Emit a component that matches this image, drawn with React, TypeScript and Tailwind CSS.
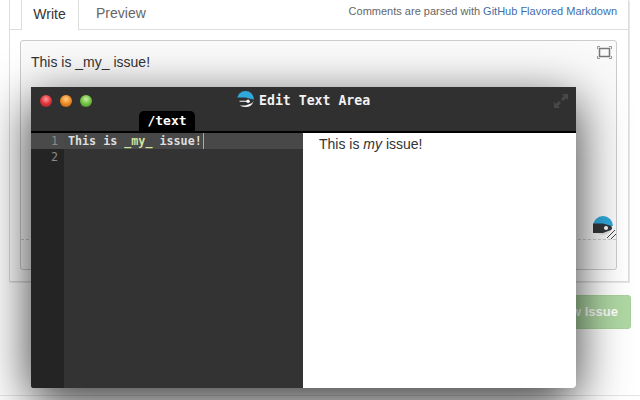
const sans = { fontFamily: '"Liberation Sans", Arial, sans-serif' };
const mono = { fontFamily: '"DejaVu Sans Mono", monospace' };

function PenLogo({ size, light }: { size: number; light?: boolean }) {
  return (
    <svg width={size} height={size} viewBox="0 0 20 20">
      <path d="M0 10a10 10 0 0 1 20 0z" fill="#2fa9dc" />
      <path d="M.5 12a10 10 0 0 0 19 0z" fill={light ? '#f4f4f4' : '#e4e4e4'} />
      <path d="M0 7.500h10l8 2.200q2 2.300 0 4.300l-8 3H0z" fill={light ? '#2f2f2f' : '#34373b'} />
      {light && <path d="M3 12h9" stroke="#fff" strokeWidth="1.200" />}
      <circle cx="13" cy="12" r="2" fill="#fff" />
    </svg>
  );
}

function Light({ className }: { className: string }) {
  return <span className={`h-[12px] w-[12px] rounded-full ${className}`} />;
}

export default function App() {
  return (
    <div className="relative h-[400px] w-[640px] overflow-hidden bg-white text-[#333]" style={sans}>
      <div className="ml-[9px] h-[282px] w-[620px] border-x border-b border-[#ddd] shadow-[1px_1px_0_#e8e8e8]">
        <div className="flex h-[30px] items-stretch border-b border-[#ddd] pl-[11px]">
          <div className="-mb-px flex w-[58px] items-center justify-center border-x border-[#ddd] bg-white pb-[2px] pr-[1px] text-[14px] text-[#333]">
            Write
          </div>
          <div className="ml-[17px] flex items-center pb-[2px] text-[14px] text-[#666]">Preview</div>
          <div className="ml-auto pr-[11px] pt-[4px] text-[11px] leading-[14px] text-[#666]">
            Comments are parsed with <span className="text-[#3f6ea8]">GitHub Flavored Markdown</span>
          </div>
        </div>
        <div className="ml-[10px] mt-[10px] h-[230px] w-[597px] rounded-[3px] border border-[#ccc] bg-[#fafafa]">
          <div className="relative h-[199px] border-b border-dashed border-[#ccc] px-[10px] pt-[12px] text-[14px] leading-[18px] text-[#333]">
            This is _my_ issue!
            <svg className="absolute right-[4px] top-[5px]" width="15" height="13" viewBox="0 0 15 13" fill="none">
              <path d="M.5 3V.5H3M12 .5h2.5V3M14.5 10v2.5H12M3 12.500H.5V10" stroke="#999" />
              <rect x="2.500" y="2.500" width="10" height="8" stroke="#777" strokeWidth="1.500" />
            </svg>
            <div className="absolute bottom-[3px] right-[3px] leading-none">
              <PenLogo size={20} />
            </div>
            <svg className="absolute bottom-0 right-0" width="9" height="9" viewBox="0 0 9 9" stroke="#444">
              <path d="M0 8 8 0M4 9l5-5" />
            </svg>
          </div>
        </div>
      </div>

      <div className="ml-[533px] mt-[13px] flex h-[34px] w-[98px] items-center justify-end rounded-[3px] border border-[#a5d29a] bg-[#afd8a3] pr-[12px] text-[13px] font-bold text-white">
        New Issue
      </div>
      <div className="mt-[66px] border-t border-[#e5e5e5]" />

      <div
        className="absolute left-[31px] top-[87px] flex h-[301px] w-[545px] flex-col overflow-hidden rounded-b-[3px] bg-[#333] shadow-[0_14px_50px_rgba(0,0,0,0.8)]"
        style={mono}
      >
        <div className="relative flex h-[46px] shrink-0 items-start border-b-2 border-black bg-[#303030]">
          <div className="absolute left-[9px] top-[8px] flex gap-[8px]">
            <Light className="bg-[radial-gradient(circle_at_50%_35%,#ff9a9a,#e0323a_50%,#8a2428)]" />
            <Light className="bg-[radial-gradient(circle_at_50%_35%,#ffd08a,#f08a20_50%,#9a5a1c)]" />
            <Light className="bg-[radial-gradient(circle_at_50%_35%,#c8f0a0,#70c040_50%,#44802c)]" />
          </div>
          <div className="ml-[206px] mt-[4px] flex items-start gap-[5px]">
            <PenLogo size={17} light />
            <span className="text-[13.200px] font-bold leading-[19px] text-[#f2f2f2]">Edit Text Area</span>
          </div>
          <svg className="absolute right-[8px] top-[7px]" width="14" height="14" viewBox="0 0 14 14" fill="#484848">
            <path d="M8 0h6v6l-2-2-3 3-2-2 3-3zM0 14V8l2 2 3-3 2 2-3 3 2 2z" />
          </svg>
          <div className="absolute bottom-0 left-[108px] flex h-[20px] w-[56px] items-center justify-center rounded-t-[5px] bg-black text-[13px] font-bold text-white">
            /text
          </div>
        </div>
        <div className="flex min-h-0 flex-1">
          <div className="w-[33px] shrink-0 bg-[#242424] text-right text-[11.700px] leading-[16px] text-[#8a8a8a]">
            <div className="bg-[#4a4a4a] pr-[6px]">1</div>
            <div className="pr-[6px]">2</div>
          </div>
          <div className="w-[239px] shrink-0 bg-[#333] text-[11.700px] font-bold leading-[16px] text-[#dedede]">
            <div className="flex bg-[#484848] pl-[4px]">
              <span className="whitespace-pre">This is </span>
              <span className="text-[#d6e29a]">_my_</span>
              <span className="whitespace-pre"> issue!</span>
              <span className="ml-px w-px bg-[#aaa]" />
            </div>
          </div>
          <div className="flex-1 bg-white pl-[16px] pt-[2px] text-[14px] leading-[18px] text-[#333]" style={sans}>
            This is <em>my</em> issue!
          </div>
        </div>
      </div>
    </div>
  );
}
